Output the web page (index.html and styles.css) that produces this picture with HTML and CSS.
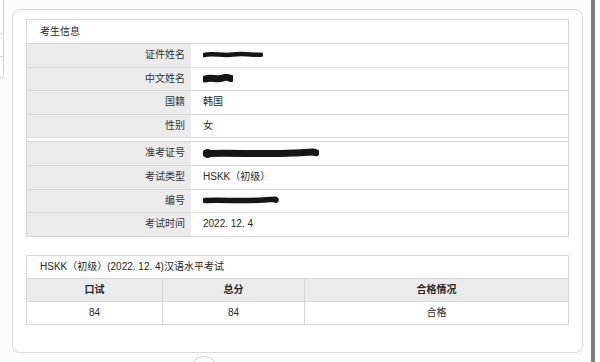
FILE: index.html
```html
<!DOCTYPE html>
<html lang="zh-CN">
<head>
<meta charset="utf-8">
<title>考生信息</title>
<link rel="stylesheet" href="styles.css">
</head>
<body>
  <div class="stub">
    <div class="stub-cell"></div>
    <div class="stub-cell"></div>
  </div>

  <div class="main">
    <section class="card">
      <div class="info">
        <div class="info-title">考生信息</div>
        <div class="group">
          <div class="row"><div class="label">证件姓名</div><div class="value"><svg class="mask" width="60" height="8" viewBox="0 0 60 8"><path d="M1 4 C10 2 20 5 30 3.5 S50 4 58 3.8" stroke="#161616" stroke-width="4.5" fill="none" stroke-linecap="round"/></svg></div></div>
          <div class="row"><div class="label">中文姓名</div><div class="value"><svg class="mask" width="30" height="10" viewBox="0 0 30 10"><path d="M2 5 C8 3 14 6 20 4 S26 5 28 4.5" stroke="#161616" stroke-width="7" fill="none" stroke-linecap="round"/></svg></div></div>
          <div class="row"><div class="label">国籍</div><div class="value">韩国</div></div>
          <div class="row"><div class="label">性别</div><div class="value">女</div></div>
        </div>
        <div class="group">
          <div class="row"><div class="label">准考证号</div><div class="value"><svg class="mask" width="116" height="11" viewBox="0 0 116 11"><path d="M3 5.5 C30 4.5 60 6.5 90 5 S108 4 113 4.8" stroke="#161616" stroke-width="7" fill="none" stroke-linecap="round"/><circle cx="4.5" cy="5.5" r="4.5" fill="#161616"/></svg></div></div>
          <div class="row"><div class="label">考试类型</div><div class="value">HSKK（初级）</div></div>
          <div class="row"><div class="label">编号</div><div class="value"><svg class="mask" width="76" height="9" viewBox="0 0 76 9"><path d="M2 4.5 C20 3.5 40 5.5 60 4 S70 4 73 4.3" stroke="#161616" stroke-width="5.5" fill="none" stroke-linecap="round"/></svg></div></div>
          <div class="row"><div class="label">考试时间</div><div class="value">2022. 12. 4</div></div>
        </div>
      </div>

      <div class="score">
        <div class="score-title">HSKK（初级）(2022. 12. 4)汉语水平考试</div>
        <div class="score-row score-head">
          <div class="cell">口试</div>
          <div class="cell">总分</div>
          <div class="cell">合格情况</div>
        </div>
        <div class="score-row">
          <div class="cell">84</div>
          <div class="cell">84</div>
          <div class="cell">合格</div>
        </div>
      </div>
    </section>
    <div class="dot"></div>
  </div>

  <div class="edge"></div>
</body>
</html>
```

FILE: styles.css
```css
* {
  box-sizing: border-box;
}

html,
body {
  margin: 0;
  height: 100%;
}

body {
  display: flex;
  align-items: flex-start;
  background: #fcfcfc;
  font-family: "Liberation Sans", "Noto Sans CJK SC", sans-serif;
  font-size: 10px;
  color: #262626;
  overflow: hidden;
}

/* partial panel peeking in from the left */
.stub {
  width: 4px;
  height: 79px;
  background: #fff;
  border-right: 1px solid #d4d4d4;
  border-bottom: 1px solid #d4d4d4;
  border-bottom-right-radius: 4px;
  display: flex;
  flex-direction: column;
  padding-top: 33px;
}

.stub-cell {
  height: 34px;
  border-top: 1px solid #d4d4d4;
}

.main {
  margin-left: 8px;
  height: 100%;
  overflow: hidden;
  display: flex;
  flex-direction: column;
}

.card {
  flex: none;
  margin-top: 9px;
  width: 571px;
  height: 344px;
  background: #fff;
  border: 1px solid #d9d9d9;
  border-radius: 8px;
  padding: 9px 13px;
}

/* candidate info table */
.info {
  border: 1px solid #d6d6d6;
}

.info-title {
  height: 24px;
  line-height: 23px;
  padding-left: 13px;
  border-bottom: 1px solid #d6d6d6;
}

.group + .group {
  margin-top: 3px;
  border-top: 1px solid #d6d6d6;
}

.row {
  display: grid;
  grid-template-columns: 164px 1fr;
  height: 23.6px;
  border-bottom: 1px solid #dcdcdc;
}

.group:first-of-type .row {
  height: 23.4px;
}

.group:last-child .row:last-child {
  border-bottom: none;
  height: 22.6px;
}

.label {
  background: #ebebeb;
  text-align: right;
  padding-right: 6px;
  line-height: 22.5px;
  color: #333;
}

.value {
  padding-left: 12px;
  line-height: 22.5px;
  display: flex;
  align-items: center;
}

.mask {
  display: block;
}

/* score table */
.score {
  margin-top: 18px;
  border: 1px solid #d6d6d6;
}

.score-title {
  height: 23px;
  line-height: 22px;
  padding-left: 13px;
  border-bottom: 1px solid #d6d6d6;
}

.score-row {
  display: grid;
  grid-template-columns: 136px 142px 1fr;
  height: 23px;
  line-height: 22px;
  border-bottom: 1px solid #d6d6d6;
}

.score-row:last-child {
  border-bottom: none;
  height: 22px;
}

.score-head {
  background: #ebebeb;
  font-weight: bold;
}

.cell {
  text-align: center;
  border-right: 1px solid #d6d6d6;
}

.cell:last-child {
  border-right: none;
}

/* round control partly visible below the card */
.dot {
  flex: none;
  margin-top: 3px;
  margin-left: 178px;
  width: 28px;
  height: 28px;
  border-radius: 50%;
  border: 1px solid #d0d0d0;
  background: #fff;
}

/* window edge on the right */
.edge {
  margin-left: 8px;
  width: 4px;
  height: 100%;
  background: #7b7b7b;
}
```
